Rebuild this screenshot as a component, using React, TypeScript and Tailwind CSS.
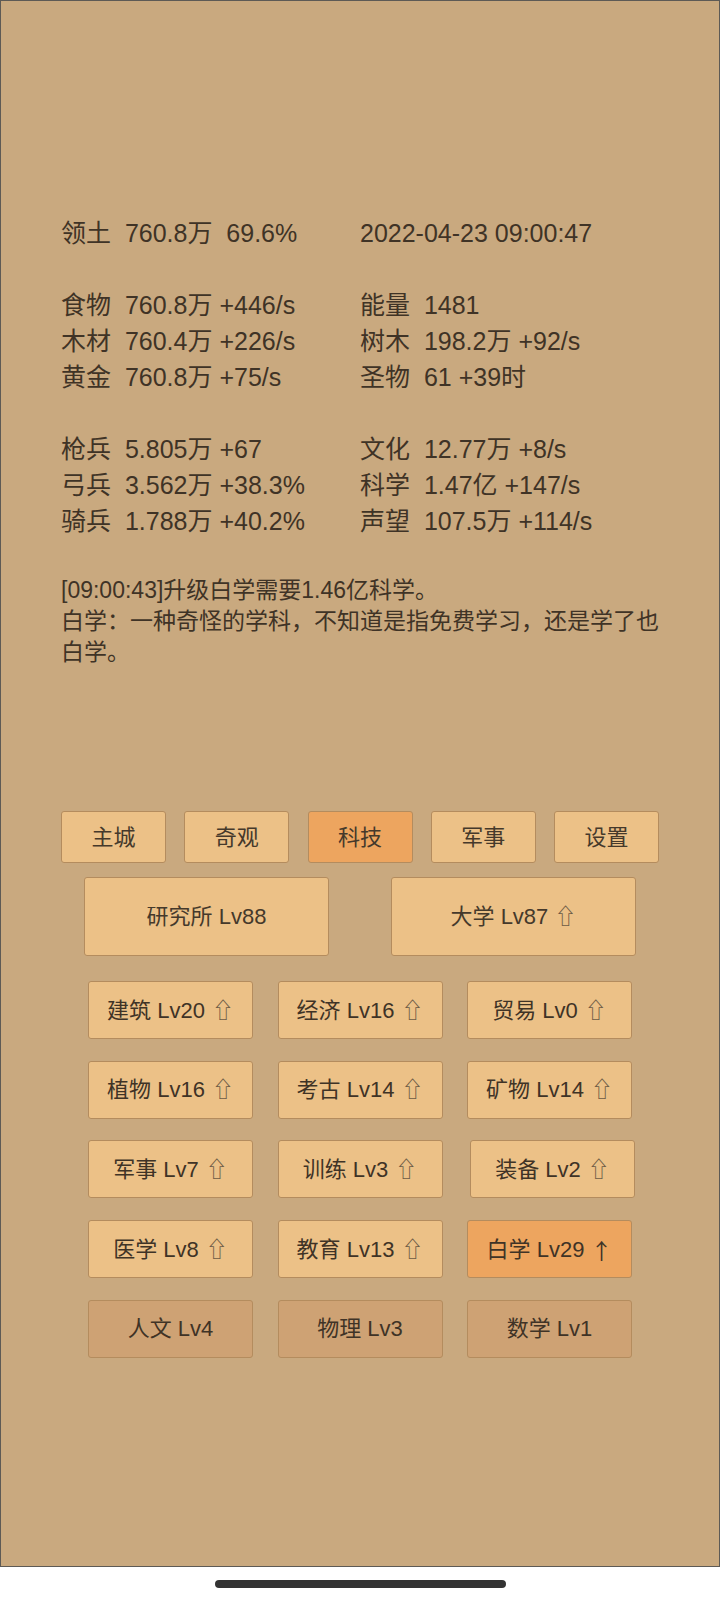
const stats: [string, string][] = [
  ['领土  760.8万  69.6%', '2022-04-23 09:00:47'],
  ['', ''],
  ['食物  760.8万 +446/s', '能量  1481'],
  ['木材  760.4万 +226/s', '树木  198.2万 +92/s'],
  ['黄金  760.8万 +75/s', '圣物  61 +39时'],
  ['', ''],
  ['枪兵  5.805万 +67', '文化  12.77万 +8/s'],
  ['弓兵  3.562万 +38.3%', '科学  1.47亿 +147/s'],
  ['骑兵  1.788万 +40.2%', '声望  107.5万 +114/s'],
]

const tabs = ['主城', '奇观', '科技', '军事', '设置']

type Tech = { name: string; arrow?: '⇧' | '↑'; kind?: 'hot' | 'locked'; nudge?: boolean }

const techs: Tech[] = [
  { name: '建筑 Lv20', arrow: '⇧' },
  { name: '经济 Lv16', arrow: '⇧' },
  { name: '贸易 Lv0', arrow: '⇧' },
  { name: '植物 Lv16', arrow: '⇧' },
  { name: '考古 Lv14', arrow: '⇧' },
  { name: '矿物 Lv14', arrow: '⇧' },
  { name: '军事 Lv7', arrow: '⇧' },
  { name: '训练 Lv3', arrow: '⇧' },
  { name: '装备 Lv2', arrow: '⇧', nudge: true },
  { name: '医学 Lv8', arrow: '⇧' },
  { name: '教育 Lv13', arrow: '⇧' },
  { name: '白学 Lv29', arrow: '↑', kind: 'hot' },
  { name: '人文 Lv4', kind: 'locked' },
  { name: '物理 Lv3', kind: 'locked' },
  { name: '数学 Lv1', kind: 'locked' },
]

const font = { fontFamily: '"Liberation Sans", "Noto Sans CJK SC", sans-serif' }

function techBg(kind?: Tech['kind']) {
  if (kind === 'hot') return 'bg-[#eda55f]'
  if (kind === 'locked') return 'bg-[#cea274]'
  return 'bg-[#ecc187]'
}

export default function App() {
  return (
    <div className="w-[720px] h-[1600px] bg-white text-[#3f3326]" style={font}>
      <div className="h-[1567px] bg-[#c9a97f] border border-[#5d5a55] pt-[214px] pl-[60px]">
        {/* resource readout */}
        <div className="text-[25px] leading-[36px] whitespace-pre">
          {stats.map(([a, b], i) => (
            <div key={i} className="flex h-[36px]">
              <div className="w-[299px]">{a}</div>
              <div>{b}</div>
            </div>
          ))}
        </div>

        {/* log line */}
        <div className="mt-[36px] w-[606px] text-[23px] leading-[30.75px]">
          <div>[09:00:43]升级白学需要1.46亿科学。</div>
          <div>白学：一种奇怪的学科，不知道是指免费学习，还是学了也白学。</div>
        </div>

        {/* tabs */}
        <div className="mt-[144px] flex gap-[18.25px]">
          {tabs.map((t) => (
            <div
              key={t}
              className={`w-[105px] h-[52px] flex items-center justify-center rounded-[3px] border border-[#b48c5e] text-[22px] text-[#45392b] ${
                t === '科技' ? 'bg-[#eda55f]' : 'bg-[#ecc187]'
              }`}
            >
              {t}
            </div>
          ))}
        </div>

        <div className="mt-[14px] ml-[23px] flex gap-[62px]">
          <div className="w-[245px] h-[79px] flex items-center justify-center rounded-[3px] border border-[#b48c5e] bg-[#ecc187] text-[22px] text-[#45392b]">
            研究所 Lv88
          </div>
          <div className="w-[245px] h-[79px] flex items-center justify-center rounded-[3px] border border-[#b48c5e] bg-[#ecc187] text-[22px] text-[#45392b]">
            大学 Lv87&nbsp;<span className="text-[#6b5a45]">⇧</span>
          </div>
        </div>

        {/* tech tree */}
        <div className="mt-[25px] ml-[27px] grid grid-cols-[165px_165px_165px] gap-x-[24.5px] gap-y-[21.6px]">
          {techs.map((t) => (
            <div
              key={t.name}
              className={`h-[58px] flex items-center justify-center rounded-[3px] border border-[#b48c5e] text-[22px] ${techBg(t.kind)} ${
                t.nudge ? 'ml-[3px] -mr-[3px]' : ''
              }`}
            >
              {t.name}
              {t.arrow === '⇧' && <span className="ml-[7px] text-[#6b5a45]">⇧</span>}
              {t.arrow === '↑' && (
                <span className="ml-[6px] font-['Noto_Sans_CJK_SC',sans-serif] text-[22px]">↑</span>
              )}
            </div>
          ))}
        </div>
      </div>

      {/* gesture bar */}
      <div className="flex justify-center pt-[13px]">
        <div className="w-[291px] h-[8px] rounded-full bg-[#333333]" />
      </div>
    </div>
  )
}
